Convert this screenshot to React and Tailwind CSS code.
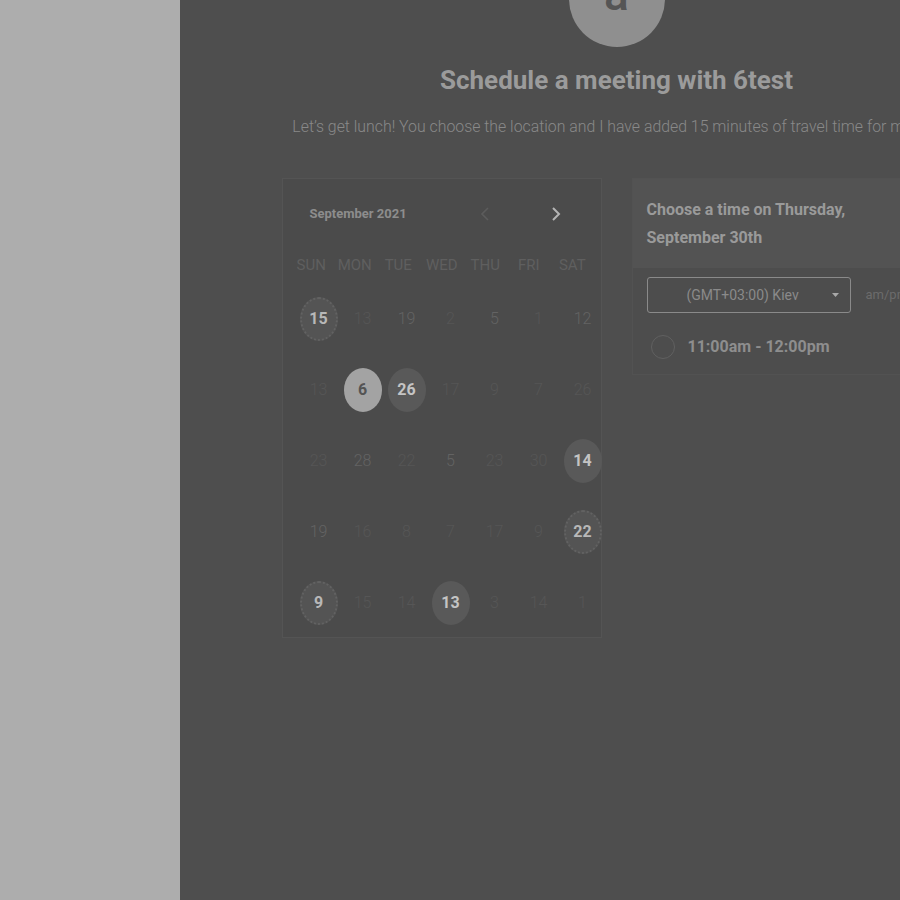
import React from "react";

const rows = [
  [
    { n: "15", t: "tex" },
    { n: "13", t: "dim" },
    { n: "19", t: "mid" },
    { n: "2", t: "dim" },
    { n: "5", t: "mid" },
    { n: "1", t: "dim" },
    { n: "12", t: "mid" },
  ],
  [
    { n: "13", t: "dim" },
    { n: "6", t: "sel" },
    { n: "26", t: "av" },
    { n: "17", t: "dim" },
    { n: "9", t: "dim" },
    { n: "7", t: "dim" },
    { n: "26", t: "dim" },
  ],
  [
    { n: "23", t: "dim" },
    { n: "28", t: "mid" },
    { n: "22", t: "dim" },
    { n: "5", t: "mid" },
    { n: "23", t: "dim" },
    { n: "30", t: "dim" },
    { n: "14", t: "av" },
  ],
  [
    { n: "19", t: "mid" },
    { n: "16", t: "dim" },
    { n: "8", t: "dim" },
    { n: "7", t: "dim" },
    { n: "17", t: "dim" },
    { n: "9", t: "dim" },
    { n: "22", t: "tex" },
  ],
  [
    { n: "9", t: "tex" },
    { n: "15", t: "dim" },
    { n: "14", t: "dim" },
    { n: "13", t: "av" },
    { n: "3", t: "dim" },
    { n: "14", t: "dim" },
    { n: "1", t: "dim" },
  ],
];

function Day({ n, t }) {
  if (t === "sel") {
    return (
      <div className="flex h-[71px] items-center justify-center">
        <div className="flex h-[44px] w-[38px] items-center justify-center rounded-[50%] bg-[#a3a3a3] text-[16px] font-bold text-[#545454]">
          {n}
        </div>
      </div>
    );
  }
  if (t === "av") {
    return (
      <div className="flex h-[71px] items-center justify-center">
        <div className="flex h-[44px] w-[38px] items-center justify-center rounded-[50%] bg-[#595959] text-[16px] font-bold text-[#c4c4c4]">
          {n}
        </div>
      </div>
    );
  }
  if (t === "tex") {
    return (
      <div className="flex h-[71px] items-center justify-center">
        <div className="flex h-[44px] w-[38px] items-center justify-center rounded-[50%] border-2 border-dotted border-[#626262] bg-[#545454] text-[16px] font-bold text-[#b8b8b8]">
          {n}
        </div>
      </div>
    );
  }
  return (
    <div
      className={
        "flex h-[71px] items-center justify-center text-[16px] font-light " +
        (t === "mid" ? "text-[#636363]" : "text-[#565656]")
      }
    >
      {n}
    </div>
  );
}

export default function App() {
  return (
    <div className="flex h-[900px] w-[900px] overflow-hidden font-['Roboto',sans-serif]">
      <div className="w-[180px] shrink-0 bg-[#adadad]" />
      <div className="flex w-[873px] shrink-0 flex-col items-center bg-[#4e4e4e]">
        <div className="mt-[-49px] flex h-[96px] w-[96px] items-center justify-center rounded-full bg-[#8f8f8f]">
          <span className="mt-[-10px] text-[46px] font-medium leading-none text-[#555555]">a</span>
        </div>
        <h1 className="mt-[16px] text-[26px] font-bold leading-[34px] text-[#9b9b9b]">
          Schedule a meeting with 6test
        </h1>
        <p className="mt-[18px] whitespace-nowrap text-[15.85px] font-light leading-[24px] text-[#898989]">
          Let’s get lunch! You choose the location and I have added 15 minutes of travel time for myself.
        </p>
        <div className="mt-[39px] flex gap-[30px]">
          {/* calendar */}
          <div className="h-[460px] w-[320px] border border-[#545454] bg-[#4b4b4b]">
            <div className="mt-[17px] flex h-[36px] items-center pl-[27px] pr-[33px]">
              <span className="text-[13px] font-bold text-[#8d8d8d]">September 2021</span>
              <div className="ml-auto flex gap-[47px]">
                <div className="flex h-[24px] w-[24px] items-center justify-center">
                  <svg width="10" height="16" viewBox="0 0 10 16">
                    <polyline points="8,2 2,8 8,14" fill="none" stroke="#5c5c5c" strokeWidth="1.6" />
                  </svg>
                </div>
                <div className="flex h-[24px] w-[24px] items-center justify-center">
                  <svg width="10" height="16" viewBox="0 0 10 16">
                    <polyline points="2,2 8,8 2,14" fill="none" stroke="#b4b4b4" strokeWidth="2" />
                  </svg>
                </div>
              </div>
            </div>
            <div className="ml-[7px] mt-[23px] grid grid-cols-[repeat(7,43.5px)] text-[15px] leading-[20px] text-[#5f5f5f]">
              {["SUN", "MON", "TUE", "WED", "THU", "FRI", "SAT"].map((d) => (
                <div key={d} className="text-center">
                  {d}
                </div>
              ))}
            </div>
            <div className="ml-[14px] mt-[8px] grid grid-cols-[repeat(7,44px)]">
              {rows.flat().map((d, i) => (
                <Day key={i} n={d.n} t={d.t} />
              ))}
            </div>
          </div>
          {/* time panel */}
          <div className="w-[320px] self-start border border-[#525252] bg-[#4d4d4d] pb-[15px]">
            <div className="h-[89px] bg-[#535353] px-[14px] pt-[17px] text-[16px] font-bold leading-[28px] text-[#9a9a9a]">
              Choose a time on Thursday,
              <br />
              September 30th
            </div>
            <div className="mt-[9px] flex items-center pl-[14px]">
              <div className="relative flex h-[36px] w-[204px] items-center rounded-[3px] border border-[#8a8a8a] pl-[39px] text-[14px] text-[#8a8a8a]">
                (GMT+03:00) Kiev
                <svg className="absolute right-[11px] top-[15px]" width="7" height="4" viewBox="0 0 7 4">
                  <polygon points="0,0 7,0 3.5,4" fill="#a8a8a8" />
                </svg>
              </div>
              <span className="ml-[15px] text-[13px] text-[#6b6b6b]">am/pm</span>
            </div>
            <div className="mt-[22px] flex items-center pl-[18px]">
              <div className="h-[24px] w-[24px] rounded-full border border-[#606060]" />
              <span className="ml-[13px] text-[16px] font-bold text-[#8e8e8e]">11:00am - 12:00pm</span>
            </div>
          </div>
        </div>
      </div>
    </div>
  );
}
